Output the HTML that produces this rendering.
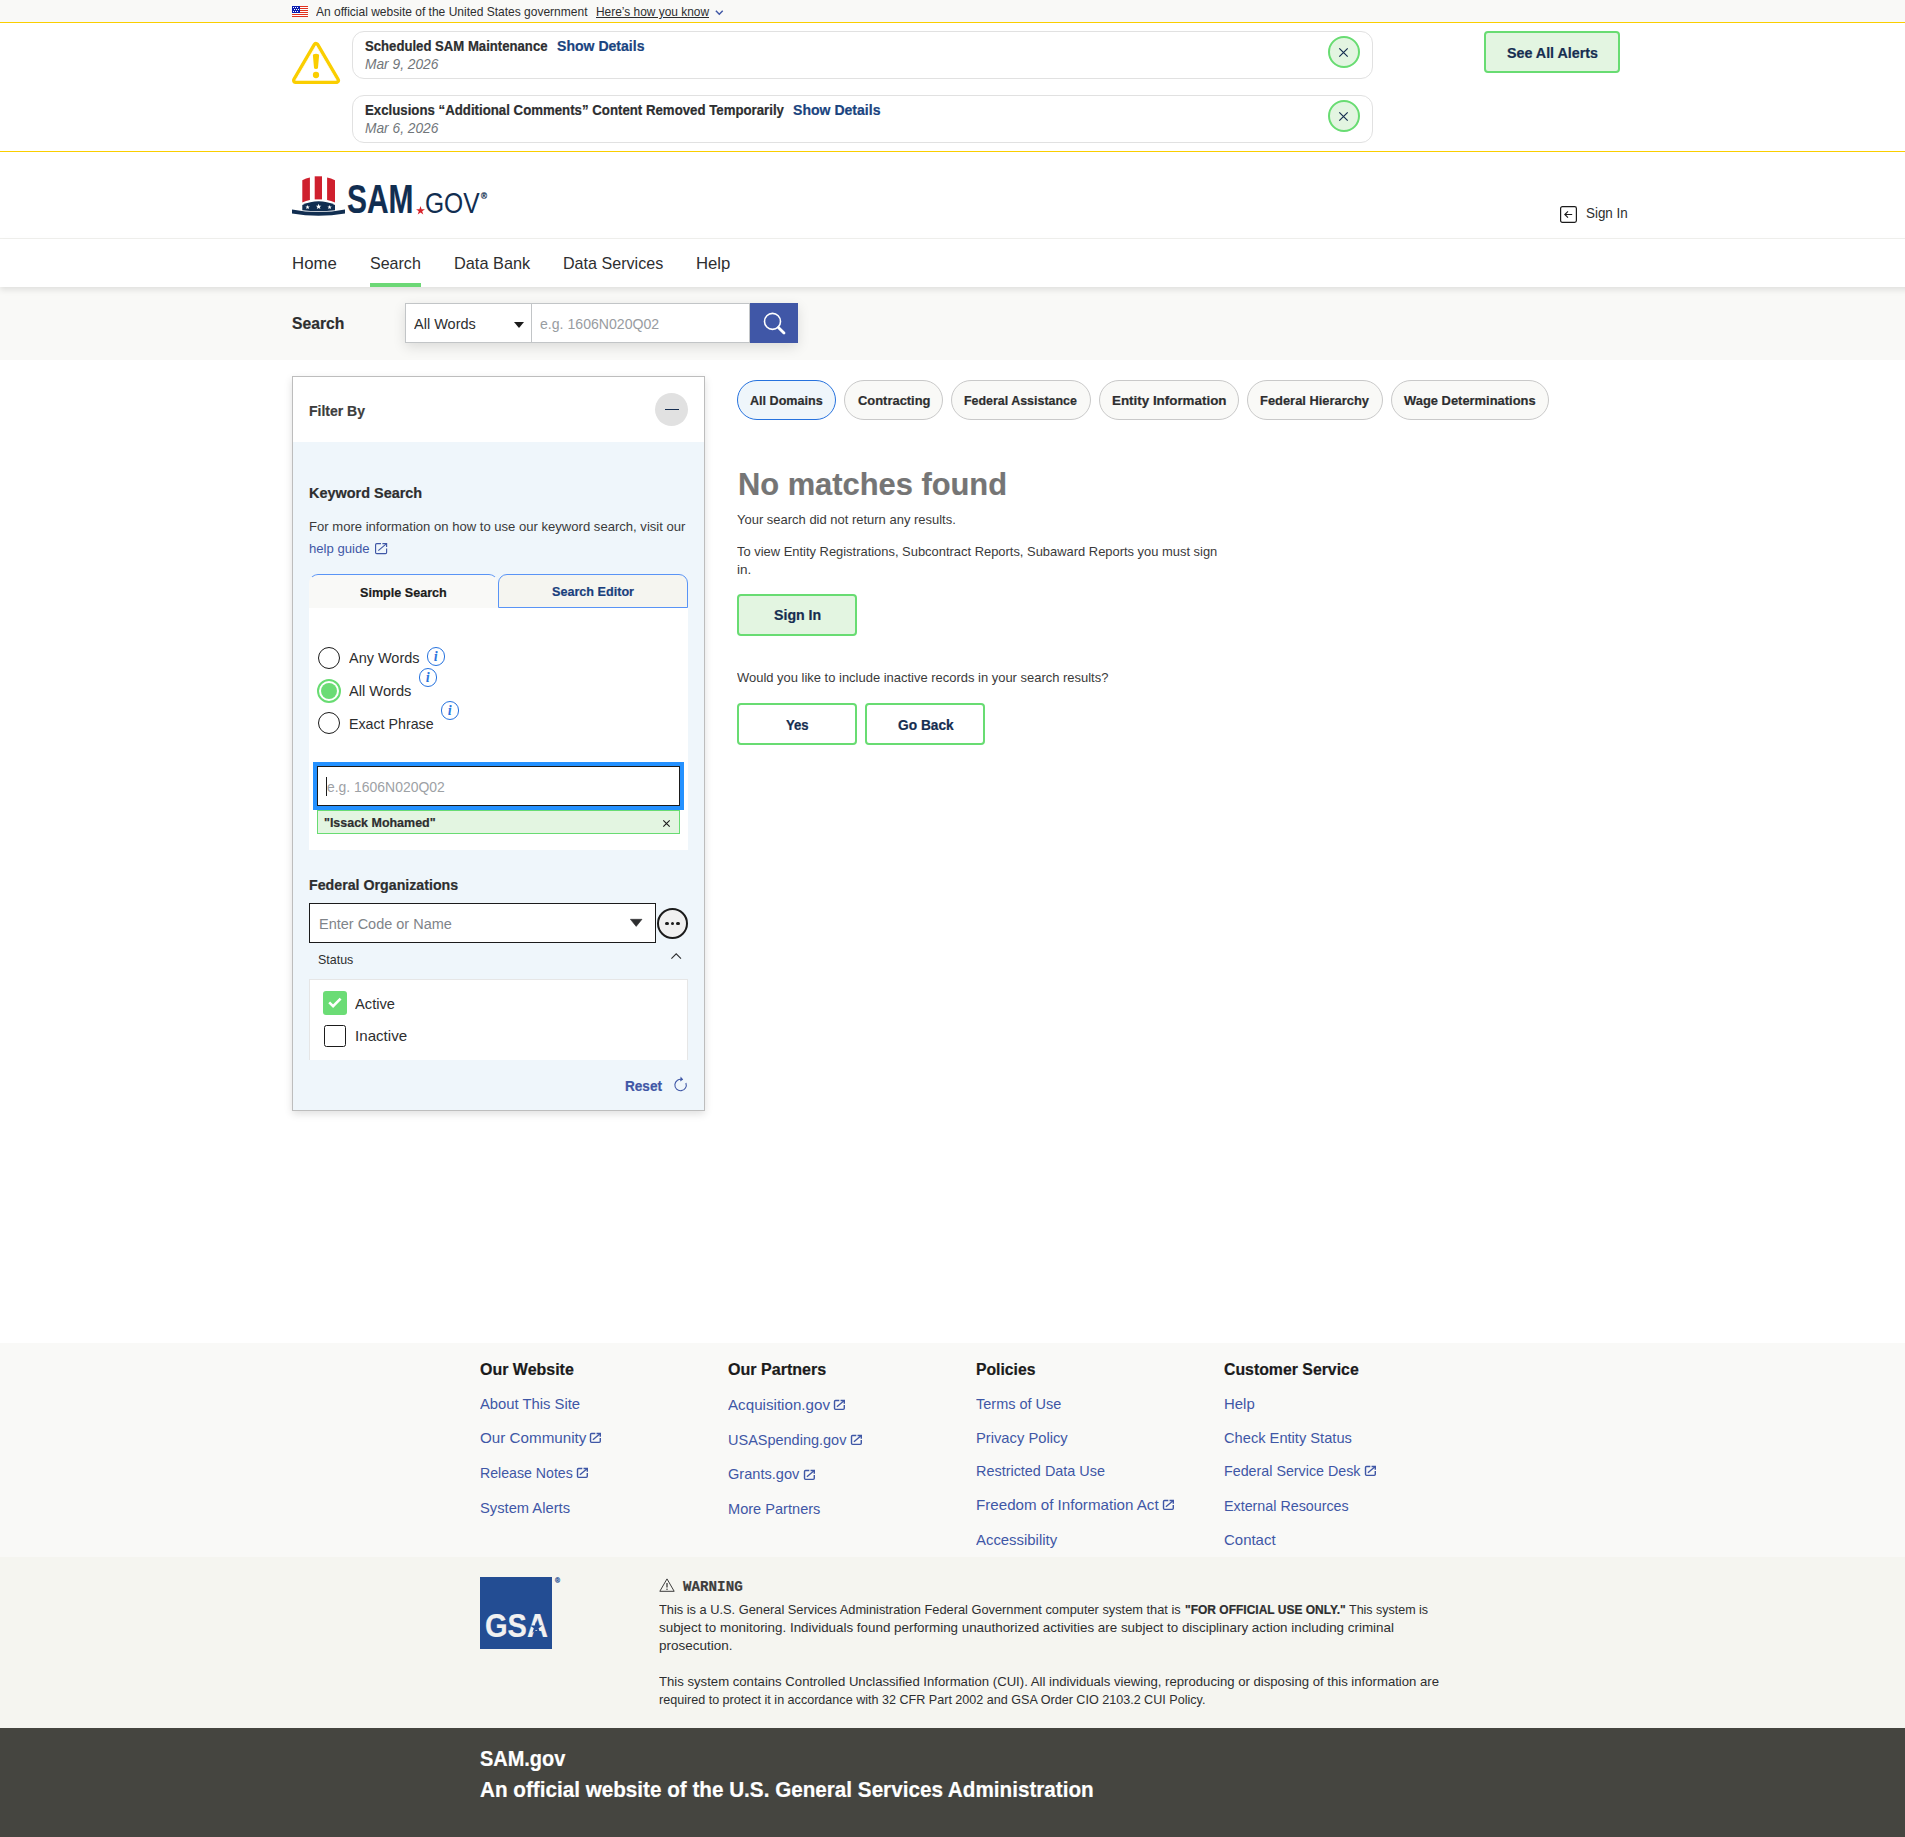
<!DOCTYPE html>
<html lang="en">
<head>
<meta charset="utf-8">
<title>SAM.gov | Search</title>
<style>
html{overflow:hidden;background:#fff}
body{margin:0;width:1920px;height:1837px;position:relative;overflow:hidden;font-family:"Liberation Sans",sans-serif;color:#1b1b1b;background:#fff}
.b{position:absolute;box-sizing:border-box}
.t{position:absolute;white-space:nowrap;line-height:1;margin:0;padding:0;font-weight:400;text-decoration:none}
.pb{display:inline-block;width:0;height:0}
svg{position:absolute;overflow:visible}
a{color:inherit}
</style>
</head>
<body>
<div class="b" style="left:0px;top:0px;width:1920px;height:22px;background:#f9f9f7;"></div>
<svg style="left:292px;top:6px" width="16" height="11" viewBox="0 0 16 11"><rect width="16" height="11" fill="#fff"/><g fill="#e0321f"><rect y="0" width="16" height="1"/><rect y="2" width="16" height="1"/><rect y="4" width="16" height="1"/><rect y="6" width="16" height="1"/><rect y="8" width="16" height="1"/><rect y="10" width="16" height="1"/></g><rect width="8" height="7" fill="#0c1eb0"/><g fill="#fff"><rect x="1" y="1" width="1" height="1"/><rect x="3" y="1" width="1" height="1"/><rect x="5" y="1" width="1" height="1"/><rect x="2" y="3" width="1" height="1"/><rect x="4" y="3" width="1" height="1"/><rect x="6" y="3" width="1" height="1"/><rect x="1" y="5" width="1" height="1"/><rect x="3" y="5" width="1" height="1"/><rect x="5" y="5" width="1" height="1"/></g></svg>
<span class="t" style="left:316px;top:6.01px;font-size:12.1px;color:#2d2e2f;transform:scaleX(0.9931);transform-origin:0 0;">An official website of the United States government</span>
<a class="t" style="left:595.6px;top:6.01px;font-size:12.1px;color:#2d2e2f;transform:scaleX(0.9849);transform-origin:0 0;text-decoration:underline;">Here’s how you know</a>
<svg style="left:714.8px;top:9.6px" width="8.6" height="5.2" viewBox="0 0 8 5" fill="none" stroke="#3f57a6" stroke-width="1.4"><path d="M0.7 0.7L4 4l3.3-3.3"/></svg>
<div class="b" style="left:0px;top:22px;width:1920px;height:1px;background:#face00;"></div>
<svg style="left:292px;top:42px" width="48" height="42" viewBox="0 0 48 42"><path d="M24 3.7L44.3 38.3H3.7z" fill="#face00" stroke="#face00" stroke-width="7.4" stroke-linejoin="round"/><path d="M24 3.7L44.3 38.3H3.7z" fill="#fff" stroke="#fff" stroke-width="0.8" stroke-linejoin="round"/><path d="M20.9 13.6Q20.8 11.85 24 11.85Q27.2 11.85 27.1 13.6L26 25.8Q25.9 27.1 24 27.1Q22.1 27.1 22 25.8z" fill="#face00"/><circle cx="24" cy="33" r="3.15" fill="#face00"/></svg>
<div class="b" style="left:352px;top:31px;width:1021px;height:48px;background:#fff;border:1px solid #e1e1e1;border-radius:12px;"></div>
<span class="t" style="left:365px;top:39.40px;font-size:14.2px;font-weight:700;-webkit-text-stroke:0.2px;color:#2d2e2f;transform:scaleX(0.926);transform-origin:0 0;">Scheduled SAM Maintenance</span>
<a class="t" style="left:556.5px;top:39.40px;font-size:14.2px;font-weight:700;-webkit-text-stroke:0.2px;color:#1a4480;transform:scaleX(0.9908);transform-origin:0 0;">Show Details</a>
<span class="t" style="left:365px;top:56.60px;font-size:14.8px;color:#71767a;font-style:italic;transform:scaleX(0.9295);transform-origin:0 0;">Mar 9, 2026</span>
<div class="b" style="left:1328px;top:36px;width:32px;height:32px;background:#e3f5e1;border:2px solid #68dc72;border-radius:50%;"></div>
<svg style="left:1339.3px;top:47.5px" width="9" height="9" viewBox="0 0 9 9" stroke="#162e51" stroke-width="1.2"><path d="M0.3 0.3l8.4 8.4M8.7 0.3L0.3 8.7"/></svg>
<div class="b" style="left:352px;top:95px;width:1021px;height:48px;background:#fff;border:1px solid #e1e1e1;border-radius:12px;"></div>
<span class="t" style="left:365px;top:102.61px;font-size:14.2px;font-weight:700;-webkit-text-stroke:0.2px;color:#2d2e2f;transform:scaleX(0.933);transform-origin:0 0;">Exclusions “Additional Comments” Content Removed Temporarily</span>
<a class="t" style="left:792.6px;top:102.61px;font-size:14.2px;font-weight:700;-webkit-text-stroke:0.2px;color:#1a4480;transform:scaleX(0.9908);transform-origin:0 0;">Show Details</a>
<span class="t" style="left:365px;top:121.01px;font-size:14.8px;color:#71767a;font-style:italic;transform:scaleX(0.9295);transform-origin:0 0;">Mar 6, 2026</span>
<div class="b" style="left:1328px;top:100px;width:32px;height:32px;background:#e3f5e1;border:2px solid #68dc72;border-radius:50%;"></div>
<svg style="left:1339.3px;top:111.5px" width="9" height="9" viewBox="0 0 9 9" stroke="#162e51" stroke-width="1.2"><path d="M0.3 0.3l8.4 8.4M8.7 0.3L0.3 8.7"/></svg>
<div class="b" style="left:1484px;top:31px;width:136px;height:42px;background:#e3f5e1;border:2px solid #68dc72;border-radius:4px;"></div>
<span class="t" style="left:1506.8px;top:45.71px;font-size:14.4px;font-weight:700;-webkit-text-stroke:0.2px;color:#162e51;transform:scaleX(0.9922);transform-origin:0 0;">See All Alerts</span>
<div class="b" style="left:0px;top:151px;width:1920px;height:1px;background:#face00;"></div>
<svg style="left:292px;top:176px" width="53" height="40" viewBox="0 0 53 40">
<path d="M10.3 4.2 Q14 2.4 17.9 1.6 V24 Q14 24.6 10.3 26.6z" fill="#cf202e"/>
<path d="M22.7 0.3 H30 V23.4 H22.7z" fill="#cf202e"/>
<path d="M35.1 1.6 Q39 2.4 43 4.2 V26.6 Q39 24.6 35.1 24z" fill="#cf202e"/>
<path d="M10.3 29 Q26.5 21.5 43 29 V34.2 Q26.5 36.5 10.3 34.2z" fill="#112e51"/>
<path d="M0 33.6 Q26.5 38.6 53 33.6 V37.5 Q26.5 42.2 0 37.5z" fill="#112e51"/>
<g fill="#fff"><path d="M15.6 28.9l.6 1.5 1.6.1-1.25 1 .45 1.55-1.4-.9-1.4.9.45-1.55-1.25-1 1.6-.1z"/><path d="M26.6 27.8l.75 1.9 2 .12-1.55 1.25.55 1.95-1.75-1.12-1.75 1.12.55-1.95-1.55-1.25 2-.12z"/><path d="M37.6 28.9l.6 1.5 1.6.1-1.25 1 .45 1.55-1.4-.9-1.4.9.45-1.55-1.25-1 1.6-.1z"/></g>
</svg>
<span class="t" style="left:346.6px;top:179.01px;font-size:40.6px;font-weight:700;-webkit-text-stroke:0.2px;color:#112e51;transform:scaleX(0.7375);transform-origin:0 0;">SAM</span>
<svg style="left:415.5px;top:205.9px" width="9" height="8.6" viewBox="0 0 10 9.5"><path d="M5 0l1.18 3.63H10L6.9 5.87l1.18 3.63L5 7.26 1.92 9.5 3.1 5.87 0 3.63h3.82z" fill="#d8232a"/></svg>
<span class="t" style="left:425.2px;top:187.90px;font-size:29.5px;color:#112e51;transform:scaleX(0.8326);transform-origin:0 0;">GOV</span>
<span class="t" style="left:481px;top:192.20px;font-size:9px;font-weight:700;-webkit-text-stroke:0.2px;color:#112e51;transform:scaleX(0.9035);transform-origin:0 0;">®</span>
<svg style="left:1560px;top:206px" width="17" height="17" viewBox="0 0 17 17" fill="none" stroke="#1b1b1b" stroke-width="1.2"><rect x="0.6" y="0.6" width="15.8" height="15.8" rx="1.8"/><path d="M12.2 8.5H5M8 5.3L4.8 8.5 8 11.7" stroke-width="1.1"/></svg>
<a class="t" style="left:1585.6px;top:204.81px;font-size:15.2px;color:#2d2e2f;transform:scaleX(0.8817);transform-origin:0 0;">Sign In</a>
<div class="b" style="left:0px;top:238px;width:1920px;height:1px;background:#f1f1ee;"></div>
<div class="b" style="left:0px;top:287px;width:1920px;height:72.8px;background:#f9f9f7;"></div>
<div class="b" style="left:0px;top:239px;width:1920px;height:48px;background:#fff;box-shadow:0 3px 6px rgba(0,0,0,.10);"></div>
<a class="t" style="left:292.3px;top:255.91px;font-size:16.6px;color:#2d2e2f;transform:scaleX(1.0121);transform-origin:0 0;">Home</a>
<a class="t" style="left:370px;top:255.91px;font-size:16.6px;color:#2d2e2f;transform:scaleX(0.9662);transform-origin:0 0;">Search</a>
<a class="t" style="left:453.6px;top:255.91px;font-size:16.6px;color:#2d2e2f;transform:scaleX(0.9834);transform-origin:0 0;">Data Bank</a>
<a class="t" style="left:562.6px;top:255.91px;font-size:16.6px;color:#2d2e2f;transform:scaleX(0.97);transform-origin:0 0;">Data Services</a>
<a class="t" style="left:695.6px;top:255.91px;font-size:16.6px;color:#2d2e2f;transform:scaleX(1.0076);transform-origin:0 0;">Help</a>
<div class="b" style="left:370px;top:283px;width:51px;height:4px;background:#6cd876;"></div>
<span class="t" style="left:292.3px;top:315.81px;font-size:15.8px;font-weight:700;-webkit-text-stroke:0.2px;color:#2d2e2f;transform:scaleX(0.9924);transform-origin:0 0;">Search</span>
<div class="b" style="left:405px;top:303px;width:393px;height:40px;background:#fff;box-shadow:0 4px 12px rgba(0,0,0,.12);"></div>
<div class="b" style="left:405px;top:303px;width:127px;height:40px;background:#fff;border:1px solid #c2c5c7;"></div>
<div class="b" style="left:531px;top:303px;width:219px;height:40px;background:#fff;border:1px solid #c2c5c7;"></div>
<span class="t" style="left:414.2px;top:316.81px;font-size:14.7px;color:#2d2e2f;transform:scaleX(0.9876);transform-origin:0 0;">All Words</span>
<svg style="left:513.7px;top:321.5px" width="10" height="6" viewBox="0 0 10 6"><path d="M0 0h10L5 6z" fill="#1b1b1b"/></svg>
<span class="t" style="left:540.2px;top:316.81px;font-size:14.7px;color:#989ca1;transform:scaleX(0.9602);transform-origin:0 0;">e.g. 1606N020Q02</span>
<div class="b" style="left:750px;top:303px;width:48px;height:40px;background:#4057a7;"></div>
<svg style="left:762px;top:311px" width="24" height="24" viewBox="0 0 24 24" fill="none" stroke="#fff" stroke-linecap="round"><circle cx="10.5" cy="10.4" r="8" stroke-width="1.6"/><path d="M16.4 16.4l5.6 5.6" stroke-width="2.8"/></svg>
<div class="b" style="left:292px;top:376px;width:413px;height:735px;background:#eff6fb;border:1px solid #bdbdbd;box-shadow:0 3px 8px rgba(0,0,0,.13);"></div>
<div class="b" style="left:293px;top:377px;width:411px;height:65px;background:#fff;"></div>
<span class="t" style="left:309.4px;top:404.01px;font-size:14.8px;font-weight:700;-webkit-text-stroke:0.2px;color:#3d3d3d;transform:scaleX(0.9459);transform-origin:0 0;">Filter By</span>
<div class="b" style="left:655px;top:393px;width:33px;height:33px;background:#e1e1e1;border-radius:50%;"></div>
<div class="b" style="left:665px;top:408.6px;width:14px;height:1.3px;background:#162e51;"></div>
<span class="t" style="left:309.4px;top:486.01px;font-size:14.8px;font-weight:700;-webkit-text-stroke:0.2px;color:#2d2e2f;transform:scaleX(0.9761);transform-origin:0 0;">Keyword Search</span>
<span class="t" style="left:309.4px;top:521.02px;font-size:12.9px;color:#3a3a3a;transform:scaleX(1.0142);transform-origin:0 0;">For more information on how to use our keyword search, visit our</span>
<a class="t" style="left:309.4px;top:543.02px;font-size:12.9px;color:#3f57a6;transform:scaleX(1.0185);transform-origin:0 0;">help guide</a>
<svg style="left:374.9px;top:542.9px" width="12.2" height="11.2" viewBox="0 0 12.2 11.2" fill="none" stroke="#3f57a6" stroke-width="1.15"><path d="M6 .58H1.8Q.58 .58 .58 1.8V9.4Q.58 10.62 1.8 10.62H10.4Q11.62 10.62 11.62 9.4V5.6"/><path d="M7.4 .58H11.62V4.1"/><path d="M11.3 .9L3.3 7.6"/></svg>
<div class="b" style="left:309px;top:607px;width:379px;height:243px;background:#fff;"></div>
<div class="b" style="left:498px;top:574px;width:190px;height:34px;background:#f5f5f0;border:1px solid #5994f6;border-radius:9px 9px 0 0;"></div>
<div class="b" style="left:309px;top:574px;width:189px;height:34px;background:#f9f9f7;border:1px solid #5994f6;border-radius:9px 9px 0 0;border-bottom:0;border-left-color:transparent;border-right-color:transparent;"></div>
<span class="t" style="left:360px;top:587.02px;font-size:12.9px;font-weight:700;-webkit-text-stroke:0.2px;transform:scaleX(0.977);transform-origin:0 0;">Simple Search</span>
<a class="t" style="left:552px;top:585.81px;font-size:12.9px;font-weight:700;-webkit-text-stroke:0.2px;color:#1a3f7d;transform:scaleX(0.9782);transform-origin:0 0;">Search Editor</a>
<div class="b" style="left:317.8px;top:646.7px;width:22px;height:22px;background:#fff;border:1.6px solid #1b1b1b;border-radius:50%;"></div>
<span class="t" style="left:349.4px;top:651.01px;font-size:14.2px;color:#2d2e2f;transform:scaleX(1.0199);transform-origin:0 0;">Any Words</span>
<div class="b" style="left:427.0px;top:647.2px;width:18.4px;height:18.4px;border:1.2px solid #2672de;border-radius:50%;"></div>
<span class="t" style="left:434.3px;top:650.11px;font-size:13.6px;font-weight:700;-webkit-text-stroke:0.2px;color:#2672de;font-style:italic;font-family:'Liberation Serif', serif;transform:scaleX(0.92);transform-origin:0 0;">i</span>
<div class="b" style="left:317px;top:679px;width:24px;height:24px;background:#fff;border:2px solid #68dc72;border-radius:50%;"></div>
<div class="b" style="left:321px;top:683px;width:16px;height:16px;background:#6bdc75;border-radius:50%;"></div>
<span class="t" style="left:349.4px;top:684.01px;font-size:14.2px;color:#2d2e2f;transform:scaleX(1.0322);transform-origin:0 0;">All Words</span>
<div class="b" style="left:418.90000000000003px;top:668.4px;width:18.4px;height:18.4px;border:1.2px solid #2672de;border-radius:50%;"></div>
<span class="t" style="left:426.20000000000005px;top:671.31px;font-size:13.6px;font-weight:700;-webkit-text-stroke:0.2px;color:#2672de;font-style:italic;font-family:'Liberation Serif', serif;transform:scaleX(0.92);transform-origin:0 0;">i</span>
<div class="b" style="left:317.8px;top:711.8px;width:22px;height:22px;background:#fff;border:1.6px solid #1b1b1b;border-radius:50%;"></div>
<span class="t" style="left:349.4px;top:716.81px;font-size:14.2px;color:#2d2e2f;transform:scaleX(1.0025);transform-origin:0 0;">Exact Phrase</span>
<div class="b" style="left:440.8px;top:701.2px;width:18.4px;height:18.4px;border:1.2px solid #2672de;border-radius:50%;"></div>
<span class="t" style="left:448.1px;top:704.11px;font-size:13.6px;font-weight:700;-webkit-text-stroke:0.2px;color:#2672de;font-style:italic;font-family:'Liberation Serif', serif;transform:scaleX(0.92);transform-origin:0 0;">i</span>
<div class="b" style="left:313px;top:762px;width:371px;height:48px;background:#2491ff;"></div>
<div class="b" style="left:317px;top:766px;width:363.4px;height:40px;background:#fff;border:1px solid #1b1b1b;"></div>
<div class="b" style="left:326px;top:776.5px;width:1px;height:19.5px;background:#1b1b1b;"></div>
<span class="t" style="left:327.4px;top:780.00px;font-size:14.7px;color:#9da1a5;transform:scaleX(0.9489);transform-origin:0 0;">e.g. 1606N020Q02</span>
<div class="b" style="left:317px;top:810px;width:363.4px;height:24px;background:#e3f5e1;border:1px solid #68dc72;"></div>
<span class="t" style="left:323.7px;top:817.11px;font-size:12.4px;font-weight:700;-webkit-text-stroke:0.2px;color:#2d2e2f;transform:scaleX(1.0061);transform-origin:0 0;">"Issack Mohamed"</span>
<svg style="left:663.2px;top:819.5px" width="7" height="7" viewBox="0 0 7 7" stroke="#1b1b1b" stroke-width="1.1"><path d="M0.3 0.3l6.4 6.4M6.7 0.3L0.3 6.7"/></svg>
<span class="t" style="left:309.4px;top:878.01px;font-size:14.2px;font-weight:700;-webkit-text-stroke:0.2px;color:#2d2e2f;transform:scaleX(1.0012);transform-origin:0 0;">Federal Organizations</span>
<div class="b" style="left:309px;top:903px;width:347px;height:39.5px;background:#fff;border:1px solid #1b1b1b;"></div>
<span class="t" style="left:318.6px;top:916.81px;font-size:14.7px;color:#7f8489;transform:scaleX(0.9859);transform-origin:0 0;">Enter Code or Name</span>
<svg style="left:629.6px;top:919.4px" width="12.4" height="7.6" viewBox="0 0 12.4 7.6"><path d="M0.4 0.3h11.6L6.2 7.4z" fill="#2d2e2f" stroke="#2d2e2f" stroke-width=".6" stroke-linejoin="round"/></svg>
<div class="b" style="left:657px;top:907.5px;width:31px;height:31px;background:#f0f0f0;border:2px solid #1b1b1b;border-radius:50%;"></div>
<div class="b" style="left:665.25px;top:921.9px;width:3.5px;height:3.5px;background:#1b1b1b;border-radius:50%;"></div>
<div class="b" style="left:670.65px;top:921.9px;width:3.5px;height:3.5px;background:#1b1b1b;border-radius:50%;"></div>
<div class="b" style="left:676.05px;top:921.9px;width:3.5px;height:3.5px;background:#1b1b1b;border-radius:50%;"></div>
<span class="t" style="left:317.5px;top:954.01px;font-size:12.6px;color:#2d2e2f;transform:scaleX(0.9887);transform-origin:0 0;">Status</span>
<svg style="left:671.4px;top:952.6px" width="10.4" height="6" viewBox="0 0 10.4 6" fill="none" stroke="#2d2e2f" stroke-width="1.1"><path d="M0.4 5.6L5.2 0.8 10 5.6"/></svg>
<div class="b" style="left:309px;top:979px;width:379px;height:81px;background:#fff;border:1px solid #e6e6e6;border-bottom:0;"></div>
<div class="b" style="left:323px;top:991px;width:24px;height:24px;background:#6bdc75;border-radius:3px;"></div>
<svg style="left:328px;top:997px" width="14" height="12" viewBox="0 0 14 12" fill="none" stroke="#fff" stroke-width="2.6"><path d="M1.2 5.4l3.9 3.7L12.6 1.6"/></svg>
<span class="t" style="left:355.1px;top:996.60px;font-size:14.4px;color:#2d2e2f;transform:scaleX(1.0203);transform-origin:0 0;">Active</span>
<div class="b" style="left:324px;top:1025px;width:22px;height:22px;background:#fff;border:1.6px solid #1b1b1b;border-radius:2.5px;"></div>
<span class="t" style="left:355.1px;top:1028.71px;font-size:14.4px;color:#2d2e2f;transform:scaleX(1.0522);transform-origin:0 0;">Inactive</span>
<a class="t" style="left:625.3px;top:1079.01px;font-size:14.2px;font-weight:700;-webkit-text-stroke:0.2px;color:#3f57a6;transform:scaleX(0.9572);transform-origin:0 0;">Reset</a>
<svg style="left:672.5px;top:1076px" width="15" height="16" viewBox="0 0 15 16" fill="none" stroke="#3f57a6" stroke-width="1.1"><path d="M9.4 3.6A5.7 5.7 0 1 0 12.9 7"/><path d="M7.6 0.6l2.6 2.8-3 2.2" fill="#3f57a6" stroke="none"/></svg>
<div class="b" style="left:737px;top:380px;width:99px;height:40px;background:#eff6fb;border:1px solid #2672de;border-radius:20px;"></div>
<a class="t" style="left:750.1px;top:395.00px;font-size:12.9px;font-weight:700;-webkit-text-stroke:0.2px;color:#2d2e2f;transform:scaleX(0.9758);transform-origin:0 0;">All Domains</a>
<div class="b" style="left:844px;top:380px;width:98.6px;height:40px;background:#f9f9f7;border:1px solid #c9c9c9;border-radius:20px;"></div>
<a class="t" style="left:857.5px;top:395.00px;font-size:12.9px;font-weight:700;-webkit-text-stroke:0.2px;color:#2d2e2f;transform:scaleX(1.0024);transform-origin:0 0;">Contracting</a>
<div class="b" style="left:951px;top:380px;width:139.7px;height:40px;background:#f9f9f7;border:1px solid #c9c9c9;border-radius:20px;"></div>
<a class="t" style="left:964.4px;top:395.00px;font-size:12.9px;font-weight:700;-webkit-text-stroke:0.2px;color:#2d2e2f;transform:scaleX(0.9647);transform-origin:0 0;">Federal Assistance</a>
<div class="b" style="left:1098.8px;top:380px;width:140px;height:40px;background:#f9f9f7;border:1px solid #c9c9c9;border-radius:20px;"></div>
<a class="t" style="left:1111.7px;top:395.00px;font-size:12.9px;font-weight:700;-webkit-text-stroke:0.2px;color:#2d2e2f;transform:scaleX(1.0381);transform-origin:0 0;">Entity Information</a>
<div class="b" style="left:1247px;top:380px;width:136px;height:40px;background:#f9f9f7;border:1px solid #c9c9c9;border-radius:20px;"></div>
<a class="t" style="left:1260.4px;top:395.00px;font-size:12.9px;font-weight:700;-webkit-text-stroke:0.2px;color:#2d2e2f;transform:scaleX(1.0007);transform-origin:0 0;">Federal Hierarchy</a>
<div class="b" style="left:1390.7px;top:380px;width:158px;height:40px;background:#f9f9f7;border:1px solid #c9c9c9;border-radius:20px;"></div>
<a class="t" style="left:1403.6px;top:395.00px;font-size:12.9px;font-weight:700;-webkit-text-stroke:0.2px;color:#2d2e2f;transform:scaleX(1.0021);transform-origin:0 0;">Wage Determinations</a>
<h1 class="t" style="left:738px;top:468.60px;font-size:31px;font-weight:700;-webkit-text-stroke:0.2px;color:#757575;transform:scaleX(0.9948);transform-origin:0 0;">No matches found</h1>
<span class="t" style="left:737px;top:514.01px;font-size:12.8px;color:#3a3a3a;transform:scaleX(1.014);transform-origin:0 0;">Your search did not return any results.</span>
<span class="t" style="left:737px;top:546.01px;font-size:12.8px;color:#3a3a3a;transform:scaleX(1.0094);transform-origin:0 0;">To view Entity Registrations, Subcontract Reports, Subaward Reports you must sign</span>
<span class="t" style="left:737px;top:563.71px;font-size:12.8px;color:#3a3a3a;transform:scaleX(1.058);transform-origin:0 0;">in.</span>
<div class="b" style="left:737px;top:594px;width:120px;height:42px;background:#e3f5e1;border:2px solid #68dc72;border-radius:4px;"></div>
<span class="t" style="left:773.7px;top:608.40px;font-size:14.2px;font-weight:700;-webkit-text-stroke:0.2px;color:#162e51;transform:scaleX(0.998);transform-origin:0 0;">Sign In</span>
<span class="t" style="left:737px;top:671.81px;font-size:12.8px;color:#3a3a3a;transform:scaleX(1.0125);transform-origin:0 0;">Would you like to include inactive records in your search results?</span>
<div class="b" style="left:737px;top:703px;width:120px;height:42px;background:#fff;border:2px solid #68dc72;border-radius:4px;"></div>
<span class="t" style="left:786.2px;top:717.81px;font-size:14.2px;font-weight:700;-webkit-text-stroke:0.2px;color:#162e51;transform:scaleX(0.9277);transform-origin:0 0;">Yes</span>
<div class="b" style="left:865px;top:703px;width:120px;height:42px;background:#fff;border:2px solid #68dc72;border-radius:4px;"></div>
<span class="t" style="left:897.6px;top:717.81px;font-size:14.2px;font-weight:700;-webkit-text-stroke:0.2px;color:#162e51;transform:scaleX(0.9676);transform-origin:0 0;">Go Back</span>
<div class="b" style="left:0px;top:1342.6px;width:1920px;height:215px;background:#f9f9f7;"></div>
<div class="b" style="left:0px;top:1556.8px;width:1920px;height:171px;background:#f5f5f0;"></div>
<div class="b" style="left:0px;top:1727.6px;width:1920px;height:110px;background:#454540;"></div>
<span class="t" style="left:480px;top:1362.40px;font-size:16px;font-weight:700;-webkit-text-stroke:0.2px;transform:scaleX(0.9984);transform-origin:0 0;">Our Website</span>
<span class="t" style="left:728.3px;top:1362.40px;font-size:16px;font-weight:700;-webkit-text-stroke:0.2px;transform:scaleX(1.004);transform-origin:0 0;">Our Partners</span>
<span class="t" style="left:976.1px;top:1362.40px;font-size:16px;font-weight:700;-webkit-text-stroke:0.2px;transform:scaleX(0.9821);transform-origin:0 0;">Policies</span>
<span class="t" style="left:1224.3px;top:1362.40px;font-size:16px;font-weight:700;-webkit-text-stroke:0.2px;transform:scaleX(0.99);transform-origin:0 0;">Customer Service</span>
<a class="t" style="left:480px;top:1397.10px;font-size:14.6px;color:#3f57a6;transform:scaleX(1.0142);transform-origin:0 0;">About This Site</a>
<a class="t" style="left:480px;top:1431.10px;font-size:14.6px;color:#3f57a6;transform:scaleX(1.0412);transform-origin:0 0;">Our Community</a>
<svg style="left:590.4px;top:1433.3px" width="10.8" height="9.91" viewBox="0 0 12.2 11.2" fill="none" stroke="#3f57a6" stroke-width="1.6"><path d="M6 .58H1.8Q.58 .58 .58 1.8V9.4Q.58 10.62 1.8 10.62H10.4Q11.62 10.62 11.62 9.4V5.6"/><path d="M7.4 .58H11.62V4.1"/><path d="M11.3 .9L3.3 7.6"/></svg>
<a class="t" style="left:480px;top:1465.91px;font-size:14.6px;color:#3f57a6;transform:scaleX(0.9693);transform-origin:0 0;">Release Notes</a>
<svg style="left:576.8px;top:1468.1000000000001px" width="10.8" height="9.91" viewBox="0 0 12.2 11.2" fill="none" stroke="#3f57a6" stroke-width="1.6"><path d="M6 .58H1.8Q.58 .58 .58 1.8V9.4Q.58 10.62 1.8 10.62H10.4Q11.62 10.62 11.62 9.4V5.6"/><path d="M7.4 .58H11.62V4.1"/><path d="M11.3 .9L3.3 7.6"/></svg>
<a class="t" style="left:480px;top:1500.71px;font-size:14.6px;color:#3f57a6;transform:scaleX(1.0088);transform-origin:0 0;">System Alerts</a>
<a class="t" style="left:728.3px;top:1397.60px;font-size:14.6px;color:#3f57a6;transform:scaleX(1.039);transform-origin:0 0;">Acquisition.gov</a>
<svg style="left:834.3px;top:1399.8px" width="10.8" height="9.91" viewBox="0 0 12.2 11.2" fill="none" stroke="#3f57a6" stroke-width="1.6"><path d="M6 .58H1.8Q.58 .58 .58 1.8V9.4Q.58 10.62 1.8 10.62H10.4Q11.62 10.62 11.62 9.4V5.6"/><path d="M7.4 .58H11.62V4.1"/><path d="M11.3 .9L3.3 7.6"/></svg>
<a class="t" style="left:728.3px;top:1432.60px;font-size:14.6px;color:#3f57a6;transform:scaleX(0.9927);transform-origin:0 0;">USASpending.gov</a>
<svg style="left:850.6999999999999px;top:1434.8px" width="10.8" height="9.91" viewBox="0 0 12.2 11.2" fill="none" stroke="#3f57a6" stroke-width="1.6"><path d="M6 .58H1.8Q.58 .58 .58 1.8V9.4Q.58 10.62 1.8 10.62H10.4Q11.62 10.62 11.62 9.4V5.6"/><path d="M7.4 .58H11.62V4.1"/><path d="M11.3 .9L3.3 7.6"/></svg>
<a class="t" style="left:728.3px;top:1467.41px;font-size:14.6px;color:#3f57a6;transform:scaleX(0.9987);transform-origin:0 0;">Grants.gov</a>
<svg style="left:803.5999999999999px;top:1469.6000000000001px" width="10.8" height="9.91" viewBox="0 0 12.2 11.2" fill="none" stroke="#3f57a6" stroke-width="1.6"><path d="M6 .58H1.8Q.58 .58 .58 1.8V9.4Q.58 10.62 1.8 10.62H10.4Q11.62 10.62 11.62 9.4V5.6"/><path d="M7.4 .58H11.62V4.1"/><path d="M11.3 .9L3.3 7.6"/></svg>
<a class="t" style="left:728.3px;top:1502.21px;font-size:14.6px;color:#3f57a6;transform:scaleX(0.9993);transform-origin:0 0;">More Partners</a>
<a class="t" style="left:976.1px;top:1397.10px;font-size:14.6px;color:#3f57a6;transform:scaleX(0.9934);transform-origin:0 0;">Terms of Use</a>
<a class="t" style="left:976.1px;top:1431.10px;font-size:14.6px;color:#3f57a6;transform:scaleX(1.0096);transform-origin:0 0;">Privacy Policy</a>
<a class="t" style="left:976.1px;top:1464.10px;font-size:14.6px;color:#3f57a6;transform:scaleX(0.9878);transform-origin:0 0;">Restricted Data Use</a>
<a class="t" style="left:976.1px;top:1498.10px;font-size:14.6px;color:#3f57a6;transform:scaleX(1.0374);transform-origin:0 0;">Freedom of Information Act</a>
<svg style="left:1162.7px;top:1500.3px" width="10.8" height="9.91" viewBox="0 0 12.2 11.2" fill="none" stroke="#3f57a6" stroke-width="1.6"><path d="M6 .58H1.8Q.58 .58 .58 1.8V9.4Q.58 10.62 1.8 10.62H10.4Q11.62 10.62 11.62 9.4V5.6"/><path d="M7.4 .58H11.62V4.1"/><path d="M11.3 .9L3.3 7.6"/></svg>
<a class="t" style="left:976.1px;top:1532.91px;font-size:14.6px;color:#3f57a6;transform:scaleX(1.0203);transform-origin:0 0;">Accessibility</a>
<a class="t" style="left:1224.3px;top:1397.10px;font-size:14.6px;color:#3f57a6;transform:scaleX(1.0228);transform-origin:0 0;">Help</a>
<a class="t" style="left:1224.3px;top:1431.10px;font-size:14.6px;color:#3f57a6;transform:scaleX(1.0042);transform-origin:0 0;">Check Entity Status</a>
<a class="t" style="left:1224.3px;top:1464.10px;font-size:14.6px;color:#3f57a6;transform:scaleX(0.9784);transform-origin:0 0;">Federal Service Desk</a>
<svg style="left:1364.8px;top:1466.3px" width="10.8" height="9.91" viewBox="0 0 12.2 11.2" fill="none" stroke="#3f57a6" stroke-width="1.6"><path d="M6 .58H1.8Q.58 .58 .58 1.8V9.4Q.58 10.62 1.8 10.62H10.4Q11.62 10.62 11.62 9.4V5.6"/><path d="M7.4 .58H11.62V4.1"/><path d="M11.3 .9L3.3 7.6"/></svg>
<a class="t" style="left:1224.3px;top:1498.91px;font-size:14.6px;color:#3f57a6;transform:scaleX(0.9791);transform-origin:0 0;">External Resources</a>
<a class="t" style="left:1224.3px;top:1532.91px;font-size:14.6px;color:#3f57a6;transform:scaleX(1.0259);transform-origin:0 0;">Contact</a>
<div class="b" style="left:480px;top:1577px;width:72px;height:72px;background:#234d93;"></div>
<span class="t" style="left:484.8px;top:1608.20px;font-size:34px;font-weight:700;-webkit-text-stroke:0.2px;color:#f1f1f1;transform:scaleX(0.8536);transform-origin:0 0;">GSA</span>
<svg style="left:530.4px;top:1621.2px" width="12.4" height="11.8" viewBox="0 0 10 9.5"><path d="M5 0l1.18 3.63H10L6.9 5.87l1.18 3.63L5 7.26 1.92 9.5 3.1 5.87 0 3.63h3.82z" fill="#234d93"/></svg>
<span class="t" style="left:554.6px;top:1578.40px;font-size:6.5px;font-weight:700;-webkit-text-stroke:0.2px;color:#234d93;transform:scaleX(1.0423);transform-origin:0 0;">®</span>
<svg style="left:659px;top:1578px" width="16" height="14" viewBox="0 0 16 14" fill="none" stroke="#3d3d3d" stroke-width="1"><path d="M8 0.9L15.2 13.3H0.8z" stroke-linejoin="round"/><path d="M8 5v4.4" stroke-width="1.3"/><circle cx="8" cy="11.2" r=".75" fill="#3d3d3d" stroke="none"/></svg>
<span class="t" style="left:683.2px;top:1579.71px;font-size:14.4px;font-weight:700;-webkit-text-stroke:0.2px;color:#3d3d3d;font-family:'Liberation Mono', monospace;transform:scaleX(0.9875);transform-origin:0 0;">WARNING</span>
<span class="t" style="left:659px;top:1604.21px;font-size:12.7px;color:#2d2e2f;transform:scaleX(1.0093);transform-origin:0 0;">This is a U.S. General Services Administration Federal Government computer system that is</span>
<span class="t" style="left:1184.9px;top:1604.21px;font-size:12.7px;font-weight:700;-webkit-text-stroke:0.2px;color:#2d2e2f;transform:scaleX(0.9456);transform-origin:0 0;">"FOR OFFICIAL USE ONLY."</span>
<span class="t" style="left:1349.4px;top:1604.21px;font-size:12.7px;color:#2d2e2f;transform:scaleX(0.9841);transform-origin:0 0;">This system is</span>
<span class="t" style="left:659px;top:1622.30px;font-size:12.7px;color:#2d2e2f;transform:scaleX(1.0547);transform-origin:0 0;">subject to monitoring. Individuals found performing unauthorized activities are subject to disciplinary action including criminal</span>
<span class="t" style="left:659px;top:1640.21px;font-size:12.7px;color:#2d2e2f;transform:scaleX(1.0618);transform-origin:0 0;">prosecution.</span>
<span class="t" style="left:659px;top:1676.02px;font-size:12.7px;color:#2d2e2f;transform:scaleX(1.0357);transform-origin:0 0;">This system contains Controlled Unclassified Information (CUI). All individuals viewing, reproducing or disposing of this information are</span>
<span class="t" style="left:659px;top:1694.11px;font-size:12.7px;color:#2d2e2f;transform:scaleX(0.9912);transform-origin:0 0;">required to protect it in accordance with 32 CFR Part 2002 and GSA Order CIO 2103.2 CUI Policy.</span>
<span class="t" style="left:480.4px;top:1748.41px;font-size:21.2px;font-weight:700;-webkit-text-stroke:0.2px;color:#fff;transform:scaleX(0.9411);transform-origin:0 0;">SAM.gov</span>
<span class="t" style="left:480.4px;top:1779.31px;font-size:21.2px;font-weight:700;-webkit-text-stroke:0.2px;color:#fff;transform:scaleX(0.9755);transform-origin:0 0;">An official website of the U.S. General Services Administration</span>
</body>
</html>
